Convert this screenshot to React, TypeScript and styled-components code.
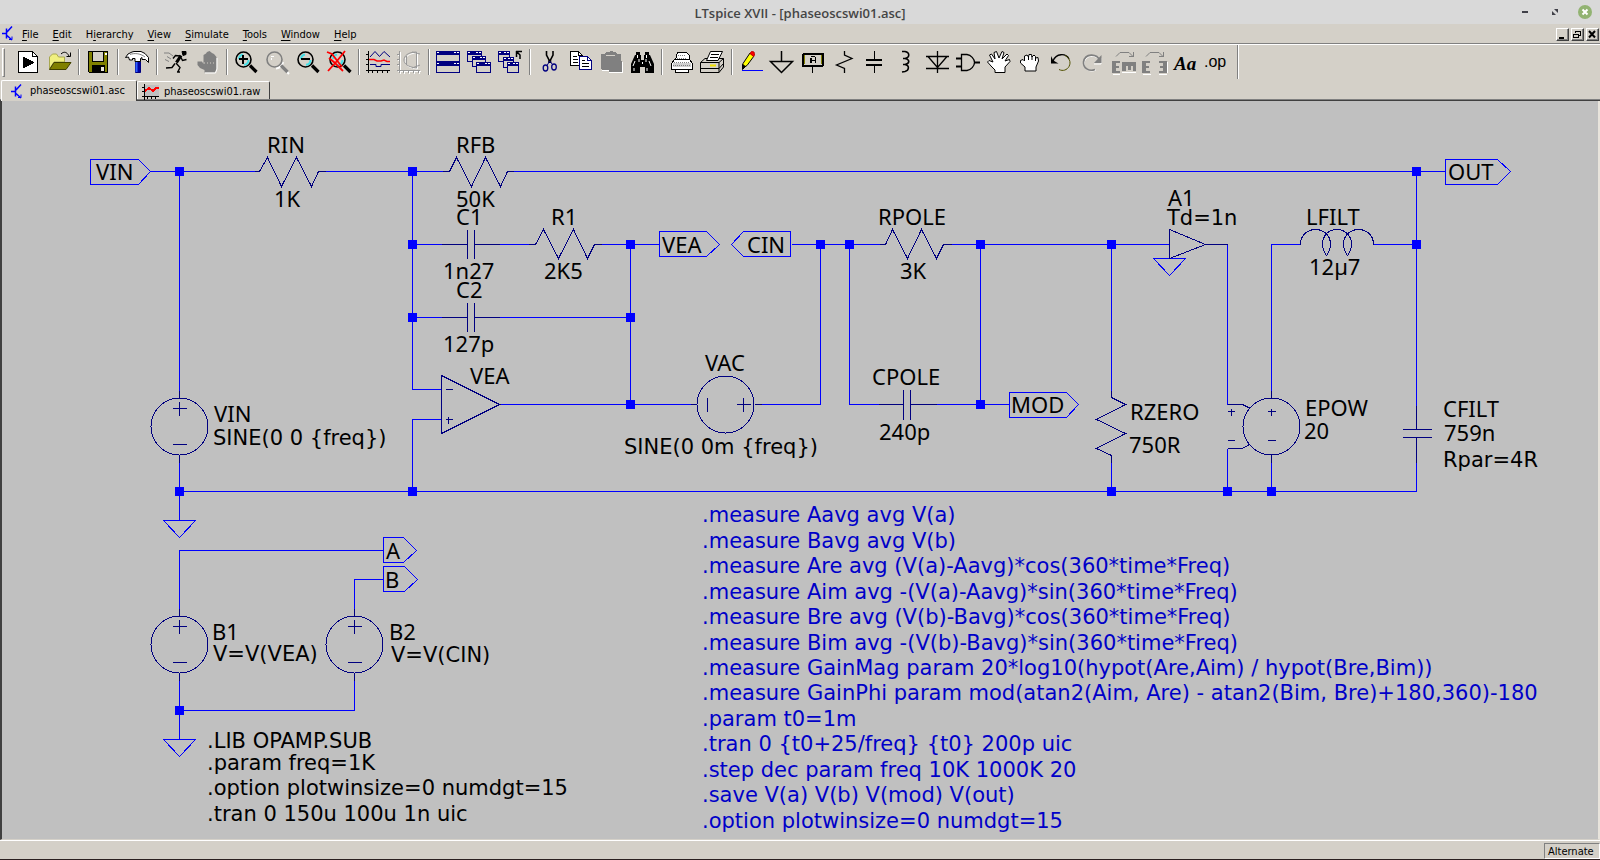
import React from "react";
import styled, { createGlobalStyle } from "styled-components";

const FACE = "#d4d0c8";
const WIRE = "#0000ff";
const SYMBOL = "#000080";

const Global = createGlobalStyle`
  html, body, #root { margin: 0; padding: 0; }
  body { background: ${FACE}; }
  * { box-sizing: border-box; }
`;

const Window = styled.div`
  min-height: 100vh;
  display: flex;
  flex-direction: column;
  background: ${FACE};
  color: #000;
  font-family: "DejaVu Sans Condensed", "DejaVu Sans", sans-serif;
  font-size: 11px;
  border-bottom: 1px solid #2b2020;
`;

const TitleBar = styled.header`
  height: 24px;
  display: grid;
  grid-template-columns: 1fr auto 1fr;
  align-items: center;
  background: #d9d9d9;
`;

const Title = styled.h1`
  grid-column: 2;
  margin: 0;
  padding-top: 1px;
  font: 600 13px/20px "Open Sans", sans-serif;
  color: #454545;
`;

const WindowControls = styled.div`
  display: flex;
  justify-content: flex-end;
  gap: 16px;
  padding-right: 8px;
`;

const ControlButton = styled.button`
  width: 14px;
  height: 14px;
  padding: 0;
  border: 0;
  background: none;
  display: block;
  & svg { display: block; }
`;

const MenuBar = styled.nav`
  height: 20px;
  display: flex;
  align-items: center;
  border-bottom: 1px solid #808080;
  box-shadow: 0 1px 0 #fff;
`;

const MenuIcon = styled.svg`
  width: 14px;
  height: 19px;
  margin-right: 1px;
`;

const MenuItem = styled.button`
  height: 19px;
  padding: 2px 7px 0;
  border: 0;
  background: none;
  color: #000;
  font: 11px/17px "DejaVu Sans Condensed", "DejaVu Sans", sans-serif;
  text-align: left;
  white-space: nowrap;
  & u { text-underline-offset: 2px; }
`;

const ChildControls = styled.div`
  margin-left: auto;
  padding: 2px 1px 0 0;
  display: flex;
  gap: 2px;
`;

const ChildButton = styled.button`
  width: 13px;
  height: 13px;
  padding: 0;
  background: ${FACE};
  border: 1px solid;
  border-color: #fff #404040 #404040 #fff;
  box-shadow: inset -1px -1px 0 #808080;
  & svg { display: block; }
`;

const ToolBar = styled.div`
  height: 36px;
  display: flex;
  align-items: center;
  padding: 1px 0 1px 2px;
`;

const Grip = styled.span`
  width: 3px;
  height: 29px;
  margin-right: 8px;
  border: 1px solid;
  border-color: #fff #808080 #808080 #fff;
`;

const ToolButton = styled.button`
  width: 31px;
  height: 28px;
  padding: 0 3px;
  border: 0;
  background: none;
  & svg { display: block; }
`;

const Separator = styled.span<{ $tall?: boolean }>`
  width: 2px;
  height: ${(p) => (p.$tall ? 34 : 26)}px;
  margin: 0 ${(p) => (p.$tall ? 5 : 3)}px;
  border-left: 1px solid #808080;
  border-right: 1px solid #fff;
`;

const TabStrip = styled.div`
  height: 21px;
  display: flex;
  align-items: flex-end;
  padding-left: 1px;
  border-bottom: 1px solid #404040;
  box-shadow: inset 0 -1px 0 #808080;
`;

const Tab = styled.button<{ $active?: boolean }>`
  height: ${(p) => (p.$active ? 21 : 18)}px;
  margin-bottom: ${(p) => (p.$active ? -1 : 1)}px;
  padding: ${(p) => (p.$active ? "0 11px 0 7px" : "2px 9px 0 4px")};
  display: flex;
  align-items: center;
  gap: ${(p) => (p.$active ? 7 : 5)}px;
  background: ${FACE};
  border: 1px solid;
  border-color: #fff #404040 transparent #fff;
  border-bottom: 0;
  border-radius: 2px 2px 0 0;
  color: #000;
  font: 11px/16px "DejaVu Sans Condensed", "DejaVu Sans", sans-serif;
  white-space: nowrap;
`;

const Sheet = styled.main`
  flex: 1;
  background: #c0c0c0;
  border-left: 2px solid #404040;
  border-right: 2px solid #e8e4dc;
  border-bottom: 1px solid ${FACE};
`;

const Drawing = styled.svg`
  display: block;
  width: 100%;
  height: auto;
`;

const Label = styled.text`
  font-family: "Noto Sans", sans-serif;
  font-size: 22px;
  white-space: pre;
`;

const Expression = styled.text`
  font-family: "DejaVu Sans", sans-serif;
  font-size: 21px;
  white-space: pre;
`;

const StatusBar = styled.footer`
  height: 19px;
  display: flex;
  justify-content: flex-end;
  align-items: flex-end;
  border-top: 1px solid #fff;
`;

const StatusCell = styled.span`
  width: 56px;
  height: 16px;
  padding-left: 3px;
  border: 1px solid;
  border-color: #808080 #fff #fff #808080;
  line-height: 16px;
  white-space: nowrap;
`;

/* ---------- toolbar icons, each on a 24 x 24 grid ---------- */

const Icon = ({ children, crisp = true }: { children: React.ReactNode; crisp?: boolean }) => (
  <svg width="24" height="24" viewBox="0 0 24 24" overflow="visible" fill="none" stroke="#000" strokeWidth="1" shapeRendering={crisp ? "crispEdges" : "auto"}>
    {children}
  </svg>
);

const Lens = ({ x = 0, ring = "#000", glint = "#40e0e8" }: { x?: number; ring?: string; glint?: string }) => (
  <g transform={`translate(${x} 0)`} shapeRendering="auto">
    {ring !== "#000" && <path d="M16 16L24 24M18 12A8 8 0 0 1 11 18.500" stroke="#fff" strokeWidth="2" />}
    <path d="M16 15.500L22.500 22" stroke={ring} strokeWidth="3.200" />
    <circle cx="9.500" cy="9.500" r="7.500" stroke={ring} strokeWidth="1.600" />
    {glint !== "none" && <path d="M5 9A5 5 0 0 1 9 4.500M14.500 10A5 5 0 0 1 10 14.800" stroke={glint} strokeWidth="2" />}
  </g>
);

const Win = ({ x, y, w }: { x: number; y: number; w: number }) => (
  <g>
    <rect x={x + 0.5} y={y + 0.5} width={w - 1} height="10" fill={FACE} stroke={SYMBOL} />
    <rect x={x} y={y} width={w} height="4" fill={SYMBOL} stroke="none" />
    <path d={`M${x + 1} ${y + 1.5}h2M${x + w - 6} ${y + 1.5}h2M${x + w - 3} ${y + 1.5}h2`} stroke="#fff" />
  </g>
);

const GREY = "#808080";

const icons: Record<string, React.ReactNode> = {
  Run: (
    <Icon>
      <path d="M2.500 1.500h14l5 5v16h-19z" fill="#fff" />
      <path d="M16.500 1.500v5h5" />
      <path d="M7 6.500L18.500 12.500L7 18.500z" fill="#000" stroke="none" />
    </Icon>
  ),
  Open: (
    <Icon crisp={false}>
      <path d="M2.500 19V7l3-3h4l2 3h6v5H7z" fill="#f0f080" stroke="#a8a850" />
      <path d="M2.500 19.500L7 12.500h17l-5 7z" fill="#808000" stroke="#404000" />
      <path d="M14 4c3-3 6-2 8 2M23.500 2.500v4h-4" />
    </Icon>
  ),
  Save: (
    <Icon>
      <path d="M2.500 1.500h19v21h-18l-1-1z" fill="#808000" />
      <rect x="6.500" y="1.500" width="11" height="10" fill={FACE} />
      <rect x="6" y="15" width="13" height="7" fill="#000" stroke="none" />
      <rect x="15" y="17" width="3" height="4" fill="#e8e4dc" stroke="none" />
      <rect x="19" y="3" width="2" height="2" fill="#fff" stroke="none" />
    </Icon>
  ),
  "Control Panel": (
    <Icon crisp={false}>
      <path d="M10.500 10V22.500H15.500V10z" fill="#0000a0" stroke={SYMBOL} />
      <path d="M11.500 12v10" stroke="#3060ff" strokeWidth="2" />
      <path d="M0.500 7.500L3 4L7 2L9 1.500H16L20 3.500L23.500 7.500V12.500L20.500 9.500H17V7.500L15.500 8.500V11.500H10V8.500H7.500V10H4.500L3.500 7z" fill="#fff" />
      <path d="M5 4.500C9 3 15 3 20 7" stroke={GREY} />
    </Icon>
  ),
  Simulate: (
    <Icon crisp={false}>
      <path d="M18 1.500h4v3l-3 1z" fill="#000" />
      <path d="M17 5.500L12.500 12.500" strokeWidth="3.200" />
      <path d="M16 6L11.500 5.500L9 8.500M17 7.500L18.500 10.500L22.500 9.500M12 13L16 17.500L13.500 22.500M11 13.500L8 17.500L2 18M13 22h3" strokeWidth="1.400" />
      <path d="M0 3h5l4 3M3 6.500l4 2.500M1 9.500l4 2" stroke={GREY} />
    </Icon>
  ),
  Halt: (
    <Icon crisp={false}>
      <path d="M9.500 22.500V20L5 18L2.500 15V11.500H7L8.500 14V5L11 3.500L12 2L14.500 1L17 3L19 4L21.500 7V18.500L20 22.500z" fill={GREY} stroke="none" />
      <path d="M9 13h12" stroke="#d0ccc4" strokeDasharray="1 2" />
      <path d="M22 8V19L20.500 23H10" stroke="#fff" />
    </Icon>
  ),
  "Zoom In": <Icon><Lens /><path d="M5 9h9M9 5v9" strokeWidth="2" /></Icon>,
  "Zoom Area": <Icon><Lens ring={GREY} glint="none" /><path d="M6 6h3M6 8v2" stroke="#fff" /></Icon>,
  "Zoom Out": <Icon><Lens /><path d="M5 9h9" strokeWidth="2" /></Icon>,
  "Zoom Fit": (
    <Icon>
      <Lens x={1} />
      <g shapeRendering="auto" stroke="#ff0000" strokeWidth="1.800">
        <path d="M0 2L5 4L15 17M18 1L10 11L1 21M2 8L8 13L16 21" />
      </g>
    </Icon>
  ),
  "Pick Traces": (
    <Icon crisp={false}>
      <path d="M2.500 1v22M0 20.500h24M0 4.500h2M0 9.500h2M0 14.500h2M6.500 20v3M11.500 20v3M16.500 20v3M21.500 20v3" />
      <path d="M4 7L9 1.500L13.500 6.500L18 1.500L24 7M4 14.500h6v2h5v-2h9" stroke={SYMBOL} />
      <path d="M3 9.500h5l3 1.500h4l3-1 3 1.500h3" stroke="#ff0000" strokeWidth="1.500" />
    </Icon>
  ),
  "Smith Chart": (
    <Icon crisp={false}>
      <path d="M3.500 2v22M1 21.500h23M7.500 21v3M12.500 21v3M17.500 21v3M22.500 21v3M1 5.500h2M1 10.500h2M1 15.500h2M20.500 3C12 3 8 7 8 11S12 18 20.500 19V3" stroke="#fff" />
      <path d="M2.500 1v22M0 20.500h23M6.500 20v3M11.500 20v3M16.500 20v3M21.500 20v3M0 4.500h2M0 9.500h2M0 14.500h2M19.500 2C11 2 7 6 7 10S11 17 19.500 18zM15 2l8 2M15 18l8-3M9.500 6v9" stroke="#989898" />
    </Icon>
  ),
  "Tile Windows": <Icon><Win x={0} y={1} w={24} /><Win x={0} y={12} w={24} /></Icon>,
  "Cascade Windows": <Icon><Win x={0} y={1} w={15} /><Win x={5} y={6} w={14} /><Win x={9} y={12} w={15} /></Icon>,
  "Close All": (
    <Icon>
      <Win x={0} y={1} w={12} /><Win x={5} y={7} w={11} /><Win x={9} y={12} w={12} />
      <path d="M18 1.500h6M18.500 1v6M19 2l3 3v4" strokeWidth="1.500" shapeRendering="auto" />
    </Icon>
  ),
  Cut: (
    <Icon crisp={false}>
      <path d="M9.500 1v4l2.500 5v3M16 1v4l-2.500 5v3" strokeWidth="1.600" />
      <ellipse cx="8.500" cy="18" rx="2.300" ry="3" stroke={SYMBOL} strokeWidth="1.300" />
      <ellipse cx="17" cy="17" rx="2.300" ry="3" stroke={SYMBOL} strokeWidth="1.300" />
      <path d="M10 15.500L12.700 11L15.500 14.500" stroke={SYMBOL} />
    </Icon>
  ),
  Copy: (
    <Icon>
      <path d="M2.500 1.500h8l4 4v10h-12z" fill="#fff" />
      <path d="M10.500 1.500v4h4M5 6.500h4M5 9.500h5M5 12.500h5" />
      <path d="M11.500 6.500h8l4 4v9h-12z" fill="#fff" stroke={SYMBOL} />
      <path d="M19.500 6.500v4h4" stroke={SYMBOL} />
      <path d="M14 10.500h3M14 13.500h7M14 16.500h7" />
    </Icon>
  ),
  Paste: (
    <Icon>
      <path d="M23.500 12V22.500H10M3 20.500h7" stroke="#fff" />
      <path d="M2 4h4l1-2h4V1h3v1h3l1 2h4v7h1v11H10V20H3L2 19z" fill={GREY} stroke="none" />
      <path d="M7 5.500h9" stroke={FACE} />
    </Icon>
  ),
  Find: (
    <Icon crisp={false}>
      <path d="M5 5h1V2h4v3h1v5h3V5h1V2h4v3h1l4 9v9h-9v-6h-5v6H1v-9z" fill="#000" stroke="none" />
      <path d="M7.500 5v3M16.500 5v3M5 11l-2 5M9 9v3M16 9v3M19 11l2 5M4 18v3M17 18v3M12.500 12v2" stroke="#fff" />
    </Icon>
  ),
  "Print Setup": (
    <Icon>
      <path d="M6.500 9.500L8.500 2.500h9l3 3v5" fill="#fff" />
      <path d="M2.500 13.500L5.500 9.500h15l3 4v6h-21z" fill="#fff" />
      <rect x="4" y="13" width="18" height="4" fill="#d0d0d0" stroke="none" />
      <path d="M6.500 19.500h13v3h-13z" fill="#fff" />
      <path d="M9 5.500h7M8 8.500h9" stroke={GREY} strokeDasharray="1 1" />
      <path d="M5 12.500h16M4 15.500h18" stroke={GREY} strokeDasharray="1 1" />
    </Icon>
  ),
  Print: (
    <Icon crisp={false}>
      <path d="M0.500 12.500L5 8.500H23.500V17L19 22.500H0.500z" fill={FACE} />
      <path d="M6.500 10.500L10.500 1.500h12L18 10.500z" fill="#fff" />
      <path d="M11 4.500h8M10 7.500h8M0.500 12.500h18.500v10M19 12.500l4.500-4M0.500 18.500h18.500l4.500-5" />
      <path d="M10 15.500h6" stroke="#f0e000" strokeWidth="2" />
    </Icon>
  ),
  Wire: (
    <Icon crisp={false}>
      <path d="M3 20.500h21" stroke={WIRE} />
      <path d="M3.500 18L4 13.500L11 3l4 3L8 15.500z" fill="#ffff00" />
      <path d="M11 3.500L12.500 1.500L15 2l.5 3-1 1.500z" fill="#ff0000" stroke="#c00000" />
      <path d="M3.500 19.500v-5l3 2z" fill="#000" />
    </Icon>
  ),
  Ground: <Icon crisp={false}><path d="M11.500 1v10.500M0.500 11.500h22L11.500 22.500z" strokeWidth="1.500" /></Icon>,
  "Label Net": (
    <Icon>
      <rect x="2" y="4" width="20" height="12" rx="1" strokeWidth="2" />
      <path d="M3.500 5v9M20.500 5v9" stroke="#808000" />
      <path d="M11.500 16v7" />
      <path d="M9.500 13V7.500M10 6.500h4M14.500 7v6M9 10.500h6" strokeWidth="1" />
      <path d="M10.500 13V7.500" />
    </Icon>
  ),
  Resistor: <Icon crisp={false}><path d="M12.500 1v4L20 8.500L4.500 15L12.500 18.500V23" strokeWidth="1.300" /></Icon>,
  Capacitor: <Icon><path d="M11.500 1v8M11.500 16v7" /><path d="M3 10h16M3 15h16" strokeWidth="2" /></Icon>,
  Inductor: <Icon crisp={false}><path d="M8 1.500h3c5 1 5 6 0 7H9h2c5 1 5 5 0 6H9h2c5 1 4 6 0 7L8 22" strokeWidth="1.600" /></Icon>,
  Diode: <Icon crisp={false}><path d="M12.500 1v22M1 6.500h23M1 18.500h23M3 6.500L12.500 17.500L22 6.500" strokeWidth="1.300" /></Icon>,
  Component: (
    <Icon crisp={false}>
      <path d="M0 8.500h5M0 16.500h5M18 12.500h6" strokeWidth="1.800" />
      <path d="M5.500 4.500H11C15 5 18.500 9 18.500 12.500S15 20 11 20.500H5.500z" strokeWidth="1.300" />
    </Icon>
  ),
  Move: (
    <Icon crisp={false}>
      <path d="M8 22.500V20L4 16L0.500 12L2 10.500L6 12L2.500 5L4.500 4L8 9L7 2.500L9.500 1.500L12 8L15 1.500L17 2.500L15 9L20 4L21.500 5.500L18 11L22.500 9.500L23 11.500L18 17V22.500z" fill="#fff" />
    </Icon>
  ),
  Drag: (
    <Icon crisp={false}>
      <path d="M7 21V17L2.500 13V10.500L5 9.500L6.500 11V6L9 5L10.500 7L11 4.500H13.500L14 7L16 5L17.500 6.500V8L20 7.500L20.500 11L18 17V21z" fill="#fff" />
      <path d="M6.500 6v5M10.500 6v4M14 6v4M17.500 7v4" />
    </Icon>
  ),
  Undo: (
    <Icon crisp={false}>
      <path d="M4 11C7 3 17 3 20 9" strokeWidth="1.300" />
      <path d="M16 5.500C20 7.500 22.500 12 20 16.500C18 20 14 21.500 10 19.500" stroke="#505000" />
      <path d="M2 6V13.500H9.500L6 11.500L4 10z" fill="#000" stroke="none" />
    </Icon>
  ),
  Redo: (
    <Icon crisp={false}>
      <path d="M21 8v6h-7M21 13C18 4 6 4 4 13C4 19 10 23 16 20" stroke="#fff" />
      <path d="M20 11C17 3 5 3 3.500 12C3 18 9 22 15 19.500" stroke={GREY} strokeWidth="1.600" />
      <path d="M21.500 5v8H14z" fill={GREY} stroke="none" />
    </Icon>
  ),
  Rotate: (
    <Icon>
      <path d="M2 24h7M11 22h14" stroke="#fff" />
      <path d="M1 11h8v2H5v3h3v2H5v3h4v2H1zM11 12h14v9h-3v-5h-2v4h-3v-4h-2v5h-4z" fill={GREY} stroke="none" />
      <path d="M5 6.500L9 2.500h9l4 4M18 6.500h5M22.500 2v5" stroke={GREY} shapeRendering="auto" />
    </Icon>
  ),
  Mirror: (
    <Icon>
      <path d="M1 24h8M17 24h8M25.500 12v11" stroke="#fff" />
      <path d="M0 11h8v2H4v3h3v2H4v3h4v2H0zM25 11h-8v2h4v3h-3v2h3v3h-4v2h8z" fill={GREY} stroke="none" />
      <path d="M4 6.500L8 2.500h9l4 4M17 6.500h5M21.500 2v5" stroke={GREY} shapeRendering="auto" />
    </Icon>
  ),
  Text: (
    <Icon>
      <text x="1" y="20" fill="#000" stroke="none" fontFamily="Liberation Serif, serif" fontSize="19" fontWeight="700" fontStyle="italic">Aa</text>
    </Icon>
  ),
  "SPICE Directive": (
    <Icon>
      <text x="0" y="17" fill="#000" stroke="none" fontFamily="Liberation Sans, sans-serif" fontSize="16">.op</text>
    </Icon>
  ),
};

const toolGroups = [
  ["Run", "Open"],
  ["Save"],
  ["Control Panel"],
  ["Simulate", "Halt"],
  ["Zoom In", "Zoom Area", "Zoom Out", "Zoom Fit"],
  ["Pick Traces", "Smith Chart"],
  ["Tile Windows", "Cascade Windows", "Close All"],
  ["Cut", "Copy", "Paste", "Find"],
  ["Print Setup", "Print"],
  ["Wire", "Ground", "Label Net", "Resistor", "Capacitor", "Inductor", "Diode", "Component", "Move", "Drag", "Undo", "Redo", "Rotate", "Mirror", "Text", "SPICE Directive"],
];

const TransistorGlyph = () => (
  <g fill="none" stroke="#0000ff" strokeWidth="1.500">
    <path d="M1 8.500h4M5.500 3.500v10M6 7l5-5.500M6 10.500l5 4.500" />
    <path d="M8 14.500h3v-3" strokeWidth="1" />
  </g>
);

const menus: [string, string, string][] = [
  ["", "F", "ile"],
  ["", "E", "dit"],
  ["H", "i", "erarchy"],
  ["", "V", "iew"],
  ["", "S", "imulate"],
  ["", "T", "ools"],
  ["", "W", "indow"],
  ["", "H", "elp"],
];

/* ---------- schematic ---------- */

const wires = [
  "M150 171H254M325 171H442M513 171H1445M179 171V390M179 462V520M179 491H1416",
  "M412 171V389H441M412 491V419H441M412 244H441M499 244H528M601 244H659M412 317H441M499 317H630",
  "M630 244V404M499 404H690M761 404H820V244M791 244H879M951 244H1169M849 244V404H878M936 404H1009M980 244V404",
  "M1111 244V390M1111 462V491M1227 244V404M1227 448V491M1271 390V244H1300M1271 462V491M1373 244H1416",
  "M1416 171V405M1416 462V491",
  "M383 550H179V608M383 579H354V608M179 680V739M179 710H354V680",
];

const symbols = [
  "M254 171H259L267 157L281 186L296 157L311 186L318 171H325",
  "M442 171H449L456 157L471 186L485 157L500 186L507 171H513",
  "M528 244H535L543 229L558 258L573 229L587 258L594 244H601",
  "M879 244H885L892 229L907 258L921 229L936 258L943 244H951",
  "M1111 390V397L1125 404L1096 419L1125 433L1096 448L1111 455V462",
  "M441 244H467M467 229V258M474 229V258M474 244H499",
  "M441 317H467M467 302V331M474 302V331M474 317H499",
  "M878 404H903M903 389V419M910 389V419M910 404H936",
  "M1416 405V429M1402 429H1431M1402 437H1431M1416 437V462",
  "M441 375V433L499 404ZM445 389H452M445 419H452M448 416V423",
  "M1169 229V258L1205 244ZM1205 244H1227",
  "M1300 244C1300 224 1330 224 1330 244C1330 249 1328 252 1326 255C1324 252 1322 249 1322 244C1322 224 1351 224 1351 244C1351 249 1349 252 1347 255C1345 252 1343 249 1343 244C1343 224 1373 224 1373 244",
  "M1227 404H1242L1250 408M1227 448H1242L1249 444M1227 411H1234M1231 408V415M1227 440H1234",
  "M1267 411H1275M1271 408V415M1267 440H1275M1271 390V397M1271 454V462",
  "M179 390V397M179 454V462M172 408H186M179 401V415M172 444H186",
  "M690 404H696M754 404H761M707 397V411M736 404H750M743 397V411",
  "M179 608V615M179 672V680M172 626H186M179 619V633M172 662H186",
  "M354 608V615M354 672V680M347 626H361M354 619V633M347 662H361",
];

const sources = [[179, 426], [725, 404], [1271, 426], [179, 644], [354, 644]];
const grounds = [[179, 520], [179, 739], [1169, 258]];
const junctions = [
  [179, 171], [412, 171], [1416, 171], [412, 244], [630, 244], [820, 244], [849, 244], [980, 244], [1111, 244], [1416, 244],
  [412, 317], [630, 317], [630, 404], [980, 404], [179, 491], [412, 491], [1111, 491], [1227, 491], [1271, 491], [179, 710],
];
const flags = [
  "M90 159H138L150 171L138 184H90Z",
  "M1445 159H1497L1510 171L1497 184H1445Z",
  "M659 231H706L719 244L706 256H659Z",
  "M790 231H743L731 244L743 256H790Z",
  "M1009 392H1066L1078 404L1066 417H1009Z",
  "M383 537H403L416 550L403 562H383Z",
  "M383 566H404L417 579L404 591H383Z",
];

type Placed = [number, number, string];

const labels: Placed[] = [
  [96, 180, "VIN"], [267, 153, "RIN"], [274, 207, "1K"], [456, 153, "RFB"], [456, 207, "50K"],
  [456, 225, "C1"], [443, 279, "1n27"], [456, 298, "C2"], [443, 352, "127p"], [551, 225, "R1"], [544, 279, "2K5"],
  [470, 384, "VEA"], [214, 422, "VIN"], [662, 253, "VEA"], [747, 253, "CIN"], [705, 371, "VAC"],
  [878, 225, "RPOLE"], [900, 279, "3K"], [872, 385, "CPOLE"], [879, 440, "240p"], [1011, 413, "MOD"],
  [1168, 206, "A1"], [1306, 225, "LFILT"], [1309, 275, "12µ7"], [1448, 180, "OUT"],
  [1130, 420, "RZERO"], [1129, 453, "750R"], [1305, 416, "EPOW"], [1304, 439, "20"],
  [1443, 417, "CFILT"], [1444, 441, "759n"],
  [386, 559, "A"], [385, 588, "B"], [212, 640, "B1"], [389, 640, "B2"],
];

const expressions: Placed[] = [
  [213, 445, "SINE(0 0 {freq})"], [624, 454, "SINE(0 0m {freq})"], [1167, 225, "Td=1n"], [1443, 467, "Rpar=4R"],
  [213, 661, "V=V(VEA)"], [391, 662, "V=V(CIN)"],
  [207, 748, ".LIB OPAMP.SUB"], [207, 770, ".param freq=1K"],
  [207, 795, ".option plotwinsize=0 numdgt=15"], [207, 821, ".tran 0 150u 100u 1n uic"],
];

const directives: [number, string][] = [
  [522, ".measure Aavg avg V(a)"],
  [548, ".measure Bavg avg V(b)"],
  [573, ".measure Are avg (V(a)-Aavg)*cos(360*time*Freq)"],
  [599, ".measure Aim avg -(V(a)-Aavg)*sin(360*time*Freq)"],
  [624, ".measure Bre avg (V(b)-Bavg)*cos(360*time*Freq)"],
  [650, ".measure Bim avg -(V(b)-Bavg)*sin(360*time*Freq)"],
  [675, ".measure GainMag param 20*log10(hypot(Are,Aim) / hypot(Bre,Bim))"],
  [700, ".measure GainPhi param mod(atan2(Aim, Are) - atan2(Bim, Bre)+180,360)-180"],
  [726, ".param t0=1m"],
  [751, ".tran 0 {t0+25/freq} {t0} 200p uic"],
  [777, ".step dec param freq 10K 1000K 20"],
  [802, ".save V(a) V(b) V(mod) V(out)"],
  [828, ".option plotwinsize=0 numdgt=15"],
];

const Schematic = () => (
  <Drawing viewBox="2 101 1596 738" role="img" aria-label="Schematic">
    <g fill="none" strokeWidth="1" shapeRendering="crispEdges" transform="translate(0.5 0.5)">
      <g stroke={WIRE}>
        {wires.map((d) => <path key={d} d={d} />)}
        {flags.map((d) => <path key={d} d={d} />)}
        {grounds.map(([x, y]) => <path key={`${x},${y}`} d={`M${x - 16} ${y}h32l-16 17z`} />)}
      </g>
      <g stroke={SYMBOL}>
        {symbols.map((d) => <path key={d} d={d} />)}
        {sources.map(([x, y]) => <circle key={`${x},${y}`} cx={x} cy={y} r="28.500" />)}
      </g>
    </g>
    <g fill={WIRE}>
      {junctions.map(([x, y]) => <rect key={`${x},${y}`} x={x - 4} y={y - 4} width="9" height="9" />)}
    </g>
    <g fill="#000">
      {labels.map(([x, y, s]) => <Label key={`${x},${y}`} x={x} y={y}>{s}</Label>)}
      {expressions.map(([x, y, s]) => <Expression key={`${x},${y}`} x={x} y={y}>{s}</Expression>)}
    </g>
    <g fill="#0000c8">
      {directives.map(([y, s]) => <Expression key={y} x="702" y={y}>{s}</Expression>)}
    </g>
  </Drawing>
);

export default function App() {
  return (
    <Window>
      <Global />
      <TitleBar>
        <Title>LTspice XVII - [phaseoscswi01.asc]</Title>
        <WindowControls>
          <ControlButton aria-label="Minimize">
            <svg width="14" height="14"><rect x="4" y="6" width="6" height="2" fill="#404048" /></svg>
          </ControlButton>
          <ControlButton aria-label="Restore">
            <svg width="14" height="14"><path d="M6 4h4v4zM4 6v4h4z" fill="#404048" /></svg>
          </ControlButton>
          <ControlButton aria-label="Close">
            <svg width="14" height="14">
              <circle cx="7" cy="7" r="7" fill="#92b372" />
              <path d="M4.500 4.500l5 5M9.500 4.500l-5 5" stroke="#fff" strokeWidth="2" />
            </svg>
          </ControlButton>
        </WindowControls>
      </TitleBar>
      <MenuBar aria-label="Main menu">
        <MenuIcon viewBox="0 0 14 19"><g transform="translate(1 1)"><TransistorGlyph /></g></MenuIcon>
        {menus.map(([a, b, c]) => <MenuItem key={a + b + c}>{a}<u>{b}</u>{c}</MenuItem>)}
        <ChildControls>
          <ChildButton aria-label="Minimize sheet">
            <svg width="11" height="11"><rect x="2" y="8" width="5" height="2" /></svg>
          </ChildButton>
          <ChildButton aria-label="Restore sheet">
            <svg width="11" height="11" fill="none" stroke="#000" shapeRendering="crispEdges">
              <path d="M3.500 4V2.500h5v4H7M3 2h6M1.500 5.500h5v3h-5zM1 5h6" />
            </svg>
          </ChildButton>
          <ChildButton aria-label="Close sheet">
            <svg width="11" height="11"><path d="M2 2l6 6.500M8 2L2 8.500" stroke="#000" strokeWidth="2" /></svg>
          </ChildButton>
        </ChildControls>
      </MenuBar>
      <ToolBar role="toolbar" aria-label="Tools">
        <Grip />
        {toolGroups.map((group, i) => (
          <React.Fragment key={group[0]}>
            {i > 0 && <Separator />}
            {group.map((name) => <ToolButton key={name} aria-label={name}>{icons[name]}</ToolButton>)}
          </React.Fragment>
        ))}
        <Separator $tall />
      </ToolBar>
      <TabStrip role="tablist">
        <Tab role="tab" aria-selected="true" $active>
          <svg width="14" height="17" viewBox="0 0 14 17"><g transform="translate(1 0)"><TransistorGlyph /></g></svg>
          phaseoscswi01.asc
        </Tab>
        <Tab role="tab" aria-selected="false">
          <svg width="17" height="16" shapeRendering="crispEdges">
            <rect x="3" y="1" width="14" height="11" fill="#c0c0c0" />
            <path d="M2.500 0v16M0 12.500h17M0 3.500h2M0 7.500h2M5.500 12v3M9.500 12v3M13.500 12v3" fill="none" stroke="#000" />
            <path d="M3 7l4-3 4 3 3-3h3" fill="none" stroke="#ff0000" strokeWidth="2" />
          </svg>
          phaseoscswi01.raw
        </Tab>
      </TabStrip>
      <Sheet><Schematic /></Sheet>
      <StatusBar><StatusCell>Alternate</StatusCell></StatusBar>
    </Window>
  );
}
